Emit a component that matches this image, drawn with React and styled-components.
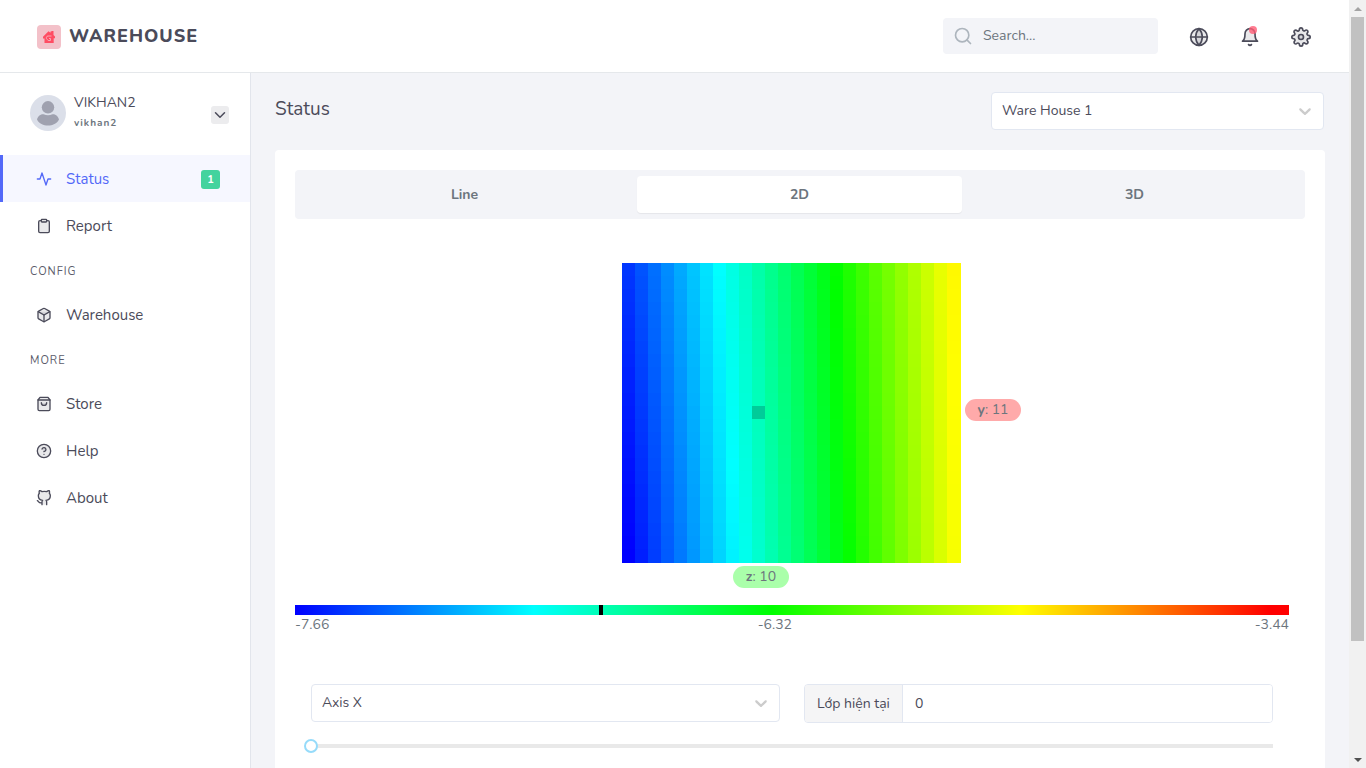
import React, { useState } from "react";
import styled, { createGlobalStyle } from "styled-components";
import {
  FiActivity, FiClipboard, FiBox, FiShoppingBag, FiHelpCircle, FiGithub,
  FiGlobe, FiBell, FiSettings, FiSearch, FiChevronDown,
} from "react-icons/fi";

const GlobalStyle = createGlobalStyle`
  *, *::before, *::after { box-sizing: border-box; }
  body { margin: 0; background: #f3f4f8; }
  body, button, input, select {
    font-family: Nunito, Lato, "Noto Sans", sans-serif;
    font-size: 14px;
    line-height: 20px;
    color: #4b4b5a;
  }
`;

const Window = styled.div`
  display: flex;
  height: 100vh;
  overflow: hidden;
`;

const Page = styled.div`
  flex: 1;
  min-width: 0;
  display: flex;
  flex-direction: column;
`;

const TopBar = styled.header`
  flex: none;
  height: 73px;
  display: flex;
  align-items: center;
  justify-content: space-between;
  padding: 0 38px 0 37px;
  background: #fff;
  border-bottom: 1px solid #e5e8eb;
`;

const Brand = styled.a`
  display: flex;
  align-items: center;
  gap: 8px;
  color: #4b4b5a;
  text-decoration: none;
  font-size: 18px;
  font-weight: 800;
  letter-spacing: 1px;
  svg { margin-top: 2px; }
`;

const TopActions = styled.div`
  display: flex;
  align-items: center;
  gap: 31px;
`;

const SearchBox = styled.label`
  display: flex;
  align-items: center;
  gap: 10px;
  width: 215px;
  height: 36px;
  padding: 0 10px;
  border-radius: 4px;
  background: #f3f4f8;
  color: #adb5bd;
  svg { flex: none; }
  input {
    min-width: 0;
    padding: 0;
    border: 0;
    outline: 0;
    background: transparent;
  }
  input::placeholder { color: #6c757d; opacity: 1; }
`;

const IconButton = styled.button`
  position: relative;
  display: flex;
  margin-top: 2px;
  padding: 0;
  border: 0;
  background: none;
  color: #4b4b5a;
  svg { fill: rgba(75, 75, 90, 0.12); }
`;

const Dot = styled.span`
  position: absolute;
  top: -1px;
  right: 3px;
  width: 8px;
  height: 8px;
  border-radius: 50%;
  background: #ff5c75;
  opacity: 0.8;
`;

const Body = styled.div`
  flex: 1;
  min-height: 0;
  display: flex;
`;

const Sidebar = styled.aside`
  flex: none;
  width: 251px;
  background: #fff;
  border-right: 1px solid #e2e5ec;
`;

const Profile = styled.div`
  display: flex;
  align-items: center;
  gap: 8px;
  height: 82px;
  padding: 0 21px 2px 30px;
`;

const ProfileText = styled.div`
  flex: 1;
`;

const UserName = styled.div`
  line-height: 20px;
`;

const UserHandle = styled.div`
  font-size: 10px;
  line-height: 20px;
  font-weight: 700;
  letter-spacing: 1px;
  color: #6c757d;
`;

const Toggle = styled.button`
  display: flex;
  align-items: center;
  justify-content: center;
  width: 18px;
  height: 18px;
  margin-top: 4px;
  padding: 0;
  border: 0;
  border-radius: 3px;
  background: #ececee;
`;

const MenuTitle = styled.h2`
  height: 42px;
  margin: 0;
  padding: 13px 30px 0;
  font-size: 11px;
  font-weight: 400;
  letter-spacing: 1px;
  color: #5c5c6b;
`;

const MenuLink = styled.a`
  display: flex;
  align-items: center;
  height: 47px;
  padding: 0 30px 0 33px;
  border-left: 3px solid ${(p) => (p.$active ? "#5369f8" : "transparent")};
  background: ${(p) => (p.$active ? "#f6f7ff" : "transparent")};
  color: ${(p) => (p.$active ? "#5369f8" : "#4b4b5a")};
  text-decoration: none;
  font-size: 15px;
  svg {
    margin-right: 14px;
    fill: ${(p) => (p.$active ? "none" : "rgba(75, 75, 90, 0.12)")};
  }
`;

const Count = styled.span`
  margin: 2px 0 0 auto;
  width: 19px;
  height: 19px;
  border-radius: 3px;
  background: #43d39e;
  color: #fff;
  font-size: 11px;
  font-weight: 700;
  line-height: 20px;
  text-align: center;
`;

const Content = styled.main`
  flex: 1;
  min-width: 0;
  padding: 19px 24px 0;
  background: #f3f4f8;
  overflow: hidden;
`;

const Heading = styled.div`
  display: flex;
  justify-content: space-between;
  height: 58px;
  padding-right: 1px;
  h1 {
    margin: 0;
    font-size: 19px;
    font-weight: 400;
    line-height: 34px;
  }
`;

const SelectBox = styled.div`
  position: relative;
  width: ${(p) => p.$width || "100%"};
  height: 38px;
  select {
    width: 100%;
    height: 100%;
    padding: 0 36px 0 10px;
    appearance: none;
    border: 1px solid #e2e7f1;
    border-radius: 4px;
    background: #fff;
  }
  svg {
    position: absolute;
    top: 9px;
    right: 9px;
    fill: #ccc;
    pointer-events: none;
  }
`;

const Card = styled.section`
  padding: 20px 20px 60px;
  border-radius: 4px;
  background: #fff;
`;

const Tabs = styled.div`
  display: grid;
  grid-template-columns: repeat(3, 1fr);
  gap: 10px;
  padding: 6px 8px 6px 7px;
  border-radius: 4px;
  background: #f3f4f8;
`;

const Tab = styled.button`
  height: 37px;
  padding: 0;
  border: 0;
  border-radius: 4px;
  background: ${(p) => (p.$active ? "#fff" : "transparent")};
  box-shadow: ${(p) => (p.$active ? "0 1px 1px rgba(0, 0, 0, 0.06)" : "none")};
  color: #6c757d;
  font-weight: 700;
`;

const Chart = styled.div`
  padding: 44px 16px 0 0;
  color: #6c757d;
`;

const MapFrame = styled.div`
  position: relative;
  width: 340px;
  height: 300px;
  margin: 0 auto 42px;
  svg { display: block; }
`;

const AxisBadge = styled.span`
  position: absolute;
  width: 56px;
  height: 22px;
  border-radius: 11px;
  line-height: 22px;
  text-align: center;
  background: ${(p) => p.$color};
`;

const Scale = styled.div`
  height: 10px;
  background: linear-gradient(90deg, #00f, #0ff 24%, #0f0 48%, #ff0 73%, #f00 98%);
`;

const ScaleMark = styled.div`
  width: 4px;
  height: 10px;
  background: #000;
`;

const ScaleLabels = styled.div`
  display: grid;
  grid-template-columns: 1fr 1fr;
`;

const ScaleHalf = styled.div`
  display: flex;
  justify-content: ${(p) => (p.$end ? "flex-end" : "space-between")};
`;

const Controls = styled.div`
  display: grid;
  grid-template-columns: 1fr 1fr;
  gap: 14px 24px;
  padding: 49px 32px 0 16px;
`;

const InputGroup = styled.div`
  display: flex;
  height: 39px;
  border: 1px solid #e2e7f1;
  border-radius: 4px;
  overflow: hidden;
  label {
    flex: none;
    padding: 0 12px;
    line-height: 37px;
    background: #f5f5f6;
    border-right: 1px solid #e2e7f1;
  }
  input {
    flex: 1;
    min-width: 0;
    padding: 0 12px;
    border: 0;
    outline: 0;
  }
`;

const Slider = styled.input`
  grid-column: 1 / -1;
  appearance: none;
  width: calc(100% + 14px);
  height: 18px;
  margin: 0 -7px;
  background: none;
  &::-webkit-slider-runnable-track {
    height: 14px;
    background: linear-gradient(#e9e9e9, #e9e9e9) center / calc(100% - 14px) 4px no-repeat;
  }
  &::-webkit-slider-thumb {
    appearance: none;
    width: 14px;
    height: 14px;
    border: 2px solid #96dbfa;
    border-radius: 50%;
    background: #fff;
  }
`;

const ScrollRail = styled.div`
  flex: none;
  width: 17px;
  display: flex;
  flex-direction: column;
  background: #f1f1f1;
`;

const ScrollArrow = styled.div`
  flex: none;
  height: 17px;
  display: flex;
  align-items: center;
  justify-content: center;
`;

const ScrollTrack = styled.div`
  flex: 1;
  padding: 0 2px;
`;

const ScrollThumb = styled.div`
  height: 85%;
  background: #c1c1c1;
`;

const COLS = 26;
const ROWS = 23;
const CELL = 13;

const RAMP = [[0, 0, 255], [0, 255, 255], [0, 255, 0], [255, 255, 0], [255, 0, 0]];

function rampColor(t) {
  const x = Math.max(0, Math.min(0.9999, t)) * 4;
  const i = Math.floor(x);
  const c = RAMP[i].map((v, k) => Math.round(v + (RAMP[i + 1][k] - v) * (x - i)));
  return `rgb(${c.join(",")})`;
}

function HeatMap({ col, row }) {
  const cells = [];
  for (let r = 0; r < ROWS; r++) {
    for (let c = 0; c < COLS; c++) {
      const top = 0.053 + c * 0.0281;
      const bottom = c * 0.0297;
      const t = top + ((bottom - top) * r) / (ROWS - 1);
      const active = c === col && r === row;
      cells.push(
        <rect key={`${r}-${c}`} x={c * CELL} y={r * CELL} width={CELL + 1} height={CELL + 1}
          fill={active ? "#00cc99" : rampColor(t)} />
      );
    }
  }
  return (
    <svg width="339" height="300" shapeRendering="crispEdges" role="img" aria-label="Heat map">
      {cells}
    </svg>
  );
}

function Caret() {
  return (
    <svg width="20" height="20" viewBox="0 0 20 20" aria-hidden="true">
      <path d="M4.516 7.548c0.436-0.446 1.043-0.481 1.576 0l3.908 3.747 3.908-3.747c0.533-0.481 1.141-0.446 1.574 0 0.436 0.445 0.408 1.197 0 1.615-0.406 0.418-4.695 4.502-4.695 4.502-0.217 0.223-0.502 0.335-0.787 0.335s-0.57-0.112-0.789-0.335c0 0-4.287-4.084-4.695-4.502s-0.436-1.170 0-1.615z" />
    </svg>
  );
}

function Logo() {
  return (
    <svg width="24" height="24" viewBox="0 0 24 24" aria-hidden="true">
      <rect width="24" height="24" rx="4" fill="#f3c1c9" />
      <path d="M11.500 6.200l2 1.600V6.500h1V6h2v4l1.500 1.500v1.700h-1.300V18H7.500v-4.500H6v-1.800z" fill="#ff4d63" />
      <path d="M14.500 11h-3.500a1.800 1.800 0 0 0-1 3.200l1.200 1.300h2.300v-2h-1.500" fill="none" stroke="#f6b3bd" strokeWidth="0.900" />
    </svg>
  );
}

function Avatar() {
  return (
    <svg width="36" height="36" viewBox="0 0 36 36" aria-hidden="true">
      <circle cx="18" cy="18" r="18" fill="#dbdfe9" />
      <circle cx="18" cy="12.300" r="6.200" fill="#9fa1af" />
      <path d="M7 24.500C8 20.500 11 19 13.500 19.200c3 1.400 6 1.400 9 0 2.500-.200 5.500 1.300 6.500 5.300-2 4-6.500 6-11 6s-9-2-11-6z" fill="#9fa1af" />
    </svg>
  );
}

const MENU = [
  { items: [{ name: "Status", Icon: FiActivity, active: true, count: 1 }, { name: "Report", Icon: FiClipboard }] },
  { title: "CONFIG", items: [{ name: "Warehouse", Icon: FiBox }] },
  {
    title: "MORE",
    items: [
      { name: "Store", Icon: FiShoppingBag },
      { name: "Help", Icon: FiHelpCircle },
      { name: "About", Icon: FiGithub },
    ],
  },
];

export default function App() {
  const [tab, setTab] = useState("2D");
  const [layer, setLayer] = useState(0);
  const col = 10;
  const row = 11;

  return (
    <Window>
      <GlobalStyle />
      <Page>
        <TopBar>
          <Brand href="#home"><Logo />WAREHOUSE</Brand>
          <TopActions>
            <SearchBox>
              <FiSearch size={20} />
              <input type="text" placeholder="Search..." aria-label="Search" />
            </SearchBox>
            <IconButton aria-label="Language"><FiGlobe size={20} /></IconButton>
            <IconButton aria-label="Notifications"><FiBell size={20} /><Dot /></IconButton>
            <IconButton aria-label="Settings"><FiSettings size={20} /></IconButton>
          </TopActions>
        </TopBar>
        <Body>
          <Sidebar>
            <Profile>
              <Avatar />
              <ProfileText>
                <UserName>VIKHAN2</UserName>
                <UserHandle>vikhan2</UserHandle>
              </ProfileText>
              <Toggle aria-label="Account menu"><FiChevronDown size={18} /></Toggle>
            </Profile>
            <nav>
              {MENU.map((group, i) => (
                <React.Fragment key={i}>
                  {group.title && <MenuTitle>{group.title}</MenuTitle>}
                  {group.items.map(({ name, Icon, active, count }) => (
                    <MenuLink key={name} href={`#${name}`} $active={active}>
                      <Icon size={16} />
                      {name}
                      {count && <Count>{count}</Count>}
                    </MenuLink>
                  ))}
                </React.Fragment>
              ))}
            </nav>
          </Sidebar>
          <Content>
            <Heading>
              <h1>Status</h1>
              <SelectBox $width="333px">
                <select aria-label="Warehouse"><option>Ware House 1</option></select>
                <Caret />
              </SelectBox>
            </Heading>
            <Card>
              <Tabs>
                {["Line", "2D", "3D"].map((name) => (
                  <Tab key={name} $active={tab === name} onClick={() => setTab(name)}>{name}</Tab>
                ))}
              </Tabs>
              <Chart>
                <MapFrame>
                  <HeatMap col={col} row={row} />
                  <AxisBadge $color="#ffaaaa" style={{ left: 343, top: row * CELL - 7 }}><b>y</b>: {row}</AxisBadge>
                  <AxisBadge $color="#aaffaa" style={{ top: 303, left: col * CELL - 19 }}><b>z</b>: {col}</AxisBadge>
                </MapFrame>
                <Scale><ScaleMark style={{ marginLeft: "30.6%" }} /></Scale>
                <ScaleLabels>
                  <ScaleHalf><span>-7.66</span><span>-6.32</span></ScaleHalf>
                  <ScaleHalf $end><span>-3.44</span></ScaleHalf>
                </ScaleLabels>
              </Chart>
              <Controls>
                <SelectBox>
                  <select aria-label="Axis"><option>Axis X</option></select>
                  <Caret />
                </SelectBox>
                <InputGroup>
                  <label htmlFor="layer">Lớp hiện tại</label>
                  <input id="layer" type="text" value={layer} onChange={(e) => setLayer(e.target.value)} />
                </InputGroup>
                <Slider type="range" min="0" max="25" value={Number(layer) || 0}
                  onChange={(e) => setLayer(e.target.value)} aria-label="Layer" />
              </Controls>
            </Card>
          </Content>
        </Body>
      </Page>
      <ScrollRail aria-hidden="true">
        <ScrollArrow><svg width="8" height="4"><path d="M4 0l4 4H0z" fill="#a3a3a3" /></svg></ScrollArrow>
        <ScrollTrack><ScrollThumb /></ScrollTrack>
        <ScrollArrow><svg width="8" height="4"><path d="M0 0h8L4 4z" fill="#505050" /></svg></ScrollArrow>
      </ScrollRail>
    </Window>
  );
}
